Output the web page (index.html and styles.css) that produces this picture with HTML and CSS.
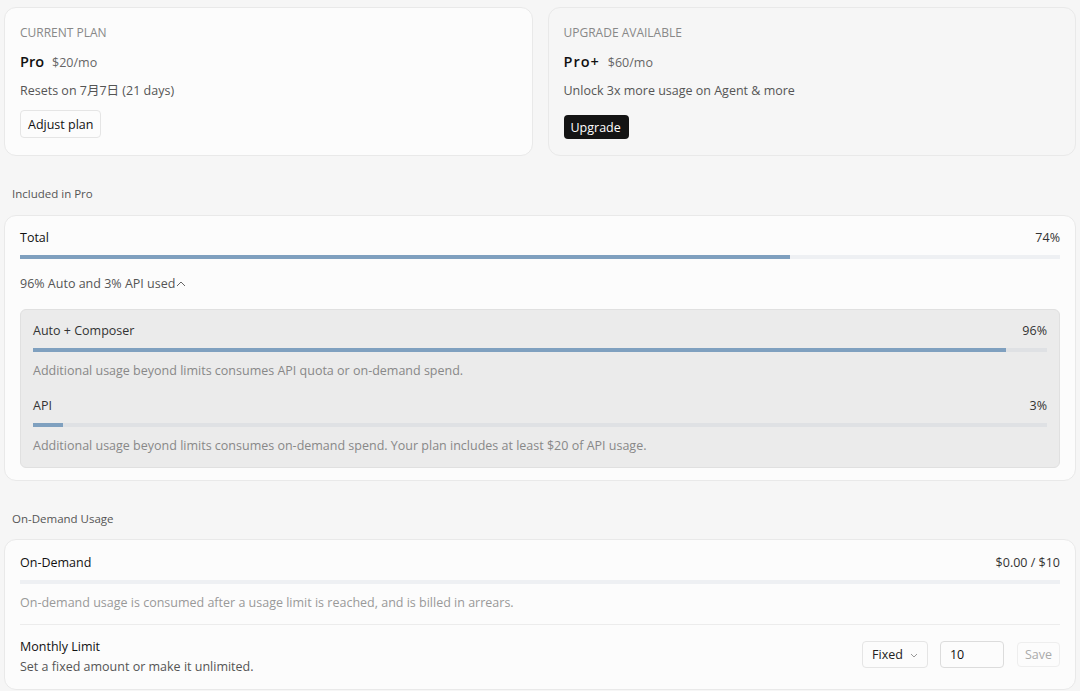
FILE: index.html
```html
<!DOCTYPE html>
<html lang="en">
<head>
    <meta charset="UTF-8">
    <title>Usage</title>
    <link rel="stylesheet" href="styles.css">
</head>
<body>
    <div class="plans">
        <div class="plan-card current">
            <div class="plan-label">CURRENT PLAN</div>
            <div class="plan-name"><strong>Pro</strong><span>$20/mo</span></div>
            <div class="plan-text">Resets on 7月7日 (21 days)</div>
            <button class="btn-outline">Adjust plan</button>
        </div>
        <div class="plan-card upgrade">
            <div class="plan-label">UPGRADE AVAILABLE</div>
            <div class="plan-name"><strong>Pro+</strong><span>$60/mo</span></div>
            <div class="plan-text">Unlock 3x more usage on Agent &amp; more</div>
            <button class="btn-dark">Upgrade</button>
        </div>
    </div>

    <div class="section-title">Included in Pro</div>
    <div class="card">
        <div class="row-head"><span class="head-name">Total</span><span>74%</span></div>
        <div class="bar"><div class="fill" style="width: 74%"></div></div>
        <div class="toggle">96% Auto and 3% API used<svg width="12" height="12" viewBox="0 0 12 12"><path d="M2 8 L6 4 L10 8" fill="none" stroke="#666" stroke-width="1"/></svg></div>
        <div class="breakdown">
            <div class="row-head"><span>Auto + Composer</span><span>96%</span></div>
            <div class="bar dim"><div class="fill" style="width: 96%"></div></div>
            <div class="desc">Additional usage beyond limits consumes API quota or on-demand spend.</div>
            <div class="row-head api"><span>API</span><span>3%</span></div>
            <div class="bar dim"><div class="fill" style="width: 3%"></div></div>
            <div class="desc">Additional usage beyond limits consumes on-demand spend. Your plan includes at least $20 of API usage.</div>
        </div>
    </div>

    <div class="section-title second">On-Demand Usage</div>
    <div class="card last">
        <div class="row-head"><span class="head-name">On-Demand</span><span>$0.00 / $10</span></div>
        <div class="bar"><div class="fill" style="width: 0%"></div></div>
        <div class="desc light">On-demand usage is consumed after a usage limit is reached, and is billed in arrears.</div>
        <div class="limit-row">
            <div>
                <div class="limit-title">Monthly Limit</div>
                <div class="limit-sub">Set a fixed amount or make it unlimited.</div>
            </div>
            <div class="controls">
                <div class="select">Fixed<svg width="10" height="10" viewBox="0 0 10 10"><path d="M2 4 L5 7 L8 4" fill="none" stroke="#999" stroke-width="1"/></svg></div>
                <div class="amount">10</div>
                <button class="btn-save">Save</button>
            </div>
        </div>
    </div>
</body>
</html>
```

FILE: styles.css
```css
body {
    margin: 0;
    padding: 7px 4px 0;
    background-color: #f6f6f6;
    font-family: "Open Sans", "Noto Sans CJK JP", sans-serif;
    font-size: 12.5px;
    color: #222;
    overflow: hidden;
}
.plans {
    display: flex;
    gap: 15px;
}
.plan-card {
    flex: 1;
    border: 1px solid #e9e9e9;
    border-radius: 12px;
    padding: 16px 15px 15px;
    height: 149px;
    box-sizing: border-box;
}
.plan-card.current {
    background-color: #fcfcfc;
}
.plan-card.upgrade {
    background-color: #f6f6f6;
}
.plan-label {
    font-size: 12px;
    color: #888;
    line-height: 18px;
}
.plan-name {
    margin-top: 10px;
    display: flex;
    align-items: baseline;
    gap: 8px;
    line-height: 20px;
}
.plan-name strong {
    font-size: 14.5px;
    font-weight: 600;
    color: #111;
}
.upgrade .plan-name strong {
    letter-spacing: 1px;
}
.plan-name span {
    font-size: 12.5px;
    color: #666;
}
.plan-text {
    margin-top: 8px;
    color: #555;
    line-height: 20px;
}
.btn-outline {
    margin-top: 9px;
    height: 28px;
    padding: 0 7px;
    font: inherit;
    color: #111;
    background-color: #fcfcfc;
    border: 1px solid #e5e5e5;
    border-radius: 4px;
}
.btn-dark {
    margin-top: 14px;
    height: 24px;
    padding: 0 8px 0 7px;
    font: inherit;
    color: #fff;
    background-color: #141414;
    border: none;
    border-radius: 4px;
}
.section-title {
    font-size: 11.5px;
    color: #555;
    padding: 30px 8px 0;
    line-height: 16px;
    height: 29px;
}
.section-title.second {
    height: 28px;
}
.card {
    background-color: #fcfcfc;
    border: 1px solid #e9e9e9;
    border-radius: 12px;
    padding: 12px 15px 12px;
}
.card.last {
    padding-top: 13px;
}
.row-head {
    display: flex;
    justify-content: space-between;
    line-height: 20px;
    color: #333;
}
.head-name {
    color: #111;
}
.bar {
    margin-top: 7px;
    height: 4px;
    background-color: #eef0f3;
}
.bar.dim {
    background-color: #dfe1e4;
}
.fill {
    height: 100%;
    background-color: #7fa0bf;
}
.toggle {
    margin-top: 15px;
    color: #555;
    line-height: 20px;
    display: flex;
    align-items: center;
}
.breakdown {
    margin-top: 15px;
    background-color: #ebebeb;
    border: 1px solid #e0e0e0;
    border-radius: 6px;
    padding: 11px 12px 11px;
}
.desc {
    margin-top: 9px;
    color: #888;
    line-height: 20px;
}
.desc.light {
    color: #999;
    padding-bottom: 11px;
    border-bottom: 1px solid #ececec;
}
.row-head.api {
    margin-top: 15px;
}
.limit-row {
    display: flex;
    justify-content: space-between;
    align-items: flex-start;
    padding-top: 12px;
}
.limit-title {
    color: #111;
    line-height: 20px;
}
.limit-sub {
    color: #555;
    line-height: 20px;
}
.controls {
    margin-top: 4px;
    display: flex;
    align-items: center;
    gap: 12px;
}
.select {
    height: 27px;
    box-sizing: border-box;
    border: 1px solid #e5e5e5;
    border-radius: 4px;
    padding: 0 8px 0 9px;
    display: flex;
    align-items: center;
    gap: 6px;
    color: #222;
}
.amount {
    width: 64px;
    height: 27px;
    box-sizing: border-box;
    border: 1px solid #dcdcdc;
    border-radius: 4px;
    padding: 0 9px;
    display: flex;
    align-items: center;
    color: #111;
}
.btn-save {
    margin-left: 1px;
    height: 25px;
    padding: 0 7px;
    font: inherit;
    color: #aaa;
    background-color: #fcfcfc;
    border: 1px solid #eeeeee;
    border-radius: 4px;
}
```
